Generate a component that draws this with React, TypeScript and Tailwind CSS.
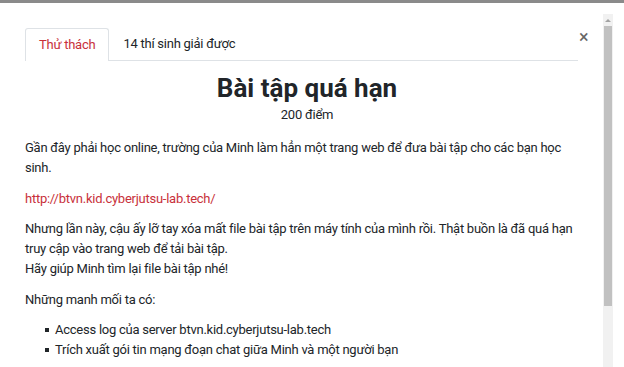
import React from "react";

export default function App() {
  return (
    <div className="relative w-[624px] h-[367px] overflow-hidden bg-white text-[#212529]" style={{ fontFamily: 'Roboto, "Noto Sans", sans-serif' }}>
      <div className="h-[3px] bg-[#8a8a8a]" />
      <div className="flex">
        <div className="w-[603px] pl-[25px] pr-[14px] pt-[24px] tracking-[-0.25px]">
          <div className="flex items-end border-b border-[#dee2e6] mr-[11px]">
            <div className="h-[33px] px-[13px] flex items-center border border-b-0 border-[#dee2e6] rounded-t-[3px] text-[13px] text-[#c8303a] -mb-px bg-white">Thử thách</div>
            <div className="h-[33px] px-[14px] flex items-center text-[13px]">14 thí sinh giải được</div>
          </div>
          <h1 className="text-center font-bold text-[26px] leading-[34px] mt-[10px] tracking-normal">Bài tập quá hạn</h1>
          <div className="text-center text-[13px] leading-[18px] mt-[1px]">200 điểm</div>
          <div className="text-[13px] leading-[20px] mt-[14px]">
            <p className="mb-[10.5px]">Gần đây phải học online, trường của Minh làm hẳn một trang web để đưa bài tập cho các bạn học sinh.</p>
            <p className="mb-[10.5px] text-[#c8303a]">http://btvn.kid.cyberjutsu-lab.tech/</p>
            <p className="mb-[10.5px]">Nhưng lần này, cậu ấy lỡ tay xóa mất file bài tập trên máy tính của mình rồi. Thật buồn là đã quá hạn truy cập vào trang web để tải bài tập.<br />Hãy giúp Minh tìm lại file bài tập nhé!</p>
            <p className="mb-[10px]">Những manh mối ta có:</p>
            <ul className="pl-[20px]">
              <li className="flex items-center gap-[6px]"><span className="w-[4px] h-[4px] bg-[#212529] inline-block" />Access log của server btvn.kid.cyberjutsu-lab.tech</li>
              <li className="flex items-center gap-[6px]"><span className="w-[4px] h-[4px] bg-[#212529] inline-block" />Trích xuất gói tin mạng đoạn chat giữa Minh và một người bạn</li>
            </ul>
          </div>
        </div>
      </div>
      <div className="absolute left-[579px] top-[29px] text-[18px] leading-[16px] text-[#666]">×</div>
      <div className="absolute left-[603px] top-[14px] w-[10px] bottom-0 bg-[#f1f1f1] flex flex-col items-center">
        <div className="h-[12px] flex items-center justify-center">
          <div className="w-0 h-0 border-l-[3px] border-r-[3px] border-b-[3px] border-l-transparent border-r-transparent border-b-[#a3a3a3]" />
        </div>
        <div className="w-[8px] h-[280px] bg-[#c1c1c1]" />
      </div>
    </div>
  );
}
